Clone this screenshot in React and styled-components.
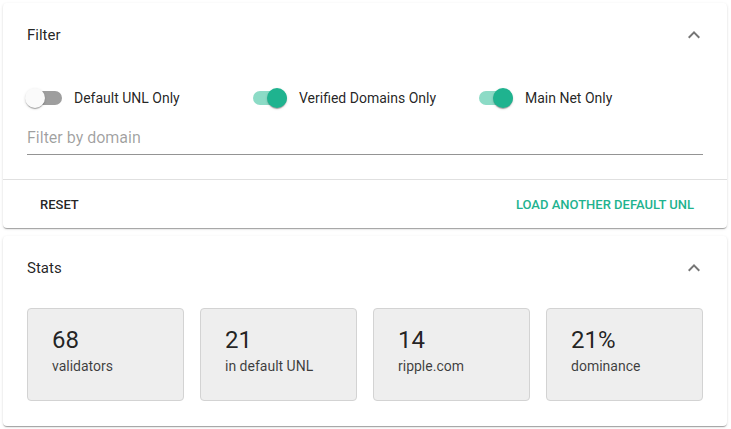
import React from "react";
import styled, { createGlobalStyle } from "styled-components";

const Global = createGlobalStyle`
  html, body { margin: 0; padding: 0; background: #fff; }
  body { font-family: Roboto, "Noto Sans", Arial, sans-serif; color: rgba(0,0,0,0.87); }
  * { box-sizing: border-box; }
`;

const TEAL = "#1fb38f";

const Page = styled.div`
  display: flex;
  flex-direction: column;
  gap: 8px;
  padding: 3px 4px 3px 3px;
  width: 731px;
`;

const Card = styled.section`
  background: #fff;
  border-radius: 4px;
  box-shadow: 0px 2px 1px -1px rgba(0,0,0,0.2), 0px 1px 1px 0px rgba(0,0,0,0.14), 0px 1px 3px 0px rgba(0,0,0,0.12);
`;

const Summary = styled.div`
  height: 64px;
  display: flex;
  align-items: center;
  justify-content: space-between;
  padding: 0 21px 0 24px;
`;

const Title = styled.div`
  font-size: 15px;
  color: rgba(0,0,0,0.87);
`;

const Chevron = styled.svg`
  width: 24px;
  height: 24px;
  fill: rgba(0,0,0,0.54);
`;

const Details = styled.div`
  padding: 12px 24px 24px;
  display: flex;
  flex-direction: column;
`;

const SwitchRow = styled.div`
  display: grid;
  grid-template-columns: 225px 226px 1fr;
  height: 38px;
  align-items: center;
`;

const Control = styled.label`
  display: flex;
  align-items: center;
  margin-left: -11px;
  font-size: 14px;
  color: rgba(0,0,0,0.87);
`;

const SwitchBase = styled.span`
  position: relative;
  width: 58px;
  height: 38px;
  padding: 12px;
  display: inline-flex;
  flex-shrink: 0;
`;

const Track = styled.span`
  width: 34px;
  height: 14px;
  border-radius: 7px;
  background: ${(p) => (p.$on ? "#8cdbc6" : "#9e9e9e")};
  align-self: center;
`;

const Thumb = styled.span`
  position: absolute;
  top: 9px;
  left: ${(p) => (p.$on ? "26px" : "9px")};
  width: 20px;
  height: 20px;
  border-radius: 50%;
  background: ${(p) => (p.$on ? TEAL : "#fafafa")};
  box-shadow: 0px 2px 1px -1px rgba(0,0,0,0.2), 0px 1px 1px 0px rgba(0,0,0,0.14), 0px 1px 3px 0px rgba(0,0,0,0.12);
`;

const Field = styled.input`
  margin-top: 5px;
  border: none;
  border-bottom: 1px solid rgba(0,0,0,0.42);
  outline: none;
  font-family: inherit;
  font-size: 16px;
  padding: 6px 0 7px;
  color: rgba(0,0,0,0.87);
  background: transparent;
  &::placeholder { color: rgba(0,0,0,0.38); }
`;

const Actions = styled.div`
  border-top: 1px solid rgba(0,0,0,0.12);
  height: 49px;
  display: flex;
  align-items: center;
  justify-content: space-between;
  padding: 0 33px 0 37px;
`;

const TextButton = styled.button`
  border: none;
  background: none;
  padding: 0;
  font-family: inherit;
  font-weight: 500;
  font-size: 13px;
  letter-spacing: 0;
  text-transform: uppercase;
  color: ${(p) => p.$color || "rgba(0,0,0,0.87)"};
  cursor: pointer;
`;

const StatsGrid = styled.div`
  display: grid;
  grid-template-columns: repeat(4, 1fr);
  gap: 16px;
  padding: 8px 24px 25px;
`;

const StatBox = styled.div`
  height: 93px;
  background: #eeeeee;
  border: 1px solid #d3d3d3;
  border-radius: 4px;
  padding: 17px 24px 0;
  display: flex;
  flex-direction: column;
`;

const StatValue = styled.div`
  font-size: 24px;
  line-height: 28px;
  color: rgba(0,0,0,0.87);
`;

const StatLabel = styled.div`
  font-size: 14px;
  line-height: 20px;
  margin-top: 2px;
  color: rgba(0,0,0,0.75);
`;

const ExpandLess = () => (
  <Chevron viewBox="0 0 24 24">
    <path d="M12 8l-6 6 1.41 1.41L12 10.83l4.59 4.58L18 14z" />
  </Chevron>
);

const Toggle = ({ on, label }) => (
  <Control>
    <SwitchBase>
      <Track $on={on} />
      <Thumb $on={on} />
    </SwitchBase>
    {label}
  </Control>
);

const stats = [
  { value: "68", label: "validators" },
  { value: "21", label: "in default UNL" },
  { value: "14", label: "ripple.com" },
  { value: "21%", label: "dominance" },
];

export default function App() {
  return (
    <>
      <Global />
      <Page>
        <Card>
          <Summary>
            <Title>Filter</Title>
            <ExpandLess />
          </Summary>
          <Details>
            <SwitchRow>
              <Toggle on={false} label="Default UNL Only" />
              <Toggle on label="Verified Domains Only" />
              <Toggle on label="Main Net Only" />
            </SwitchRow>
            <Field placeholder="Filter by domain" />
          </Details>
          <Actions>
            <TextButton>Reset</TextButton>
            <TextButton $color={TEAL}>Load another default UNL</TextButton>
          </Actions>
        </Card>
        <Card>
          <Summary>
            <Title>Stats</Title>
            <ExpandLess />
          </Summary>
          <StatsGrid>
            {stats.map((s) => (
              <StatBox key={s.label}>
                <StatValue>{s.value}</StatValue>
                <StatLabel>{s.label}</StatLabel>
              </StatBox>
            ))}
          </StatsGrid>
        </Card>
      </Page>
    </>
  );
}
